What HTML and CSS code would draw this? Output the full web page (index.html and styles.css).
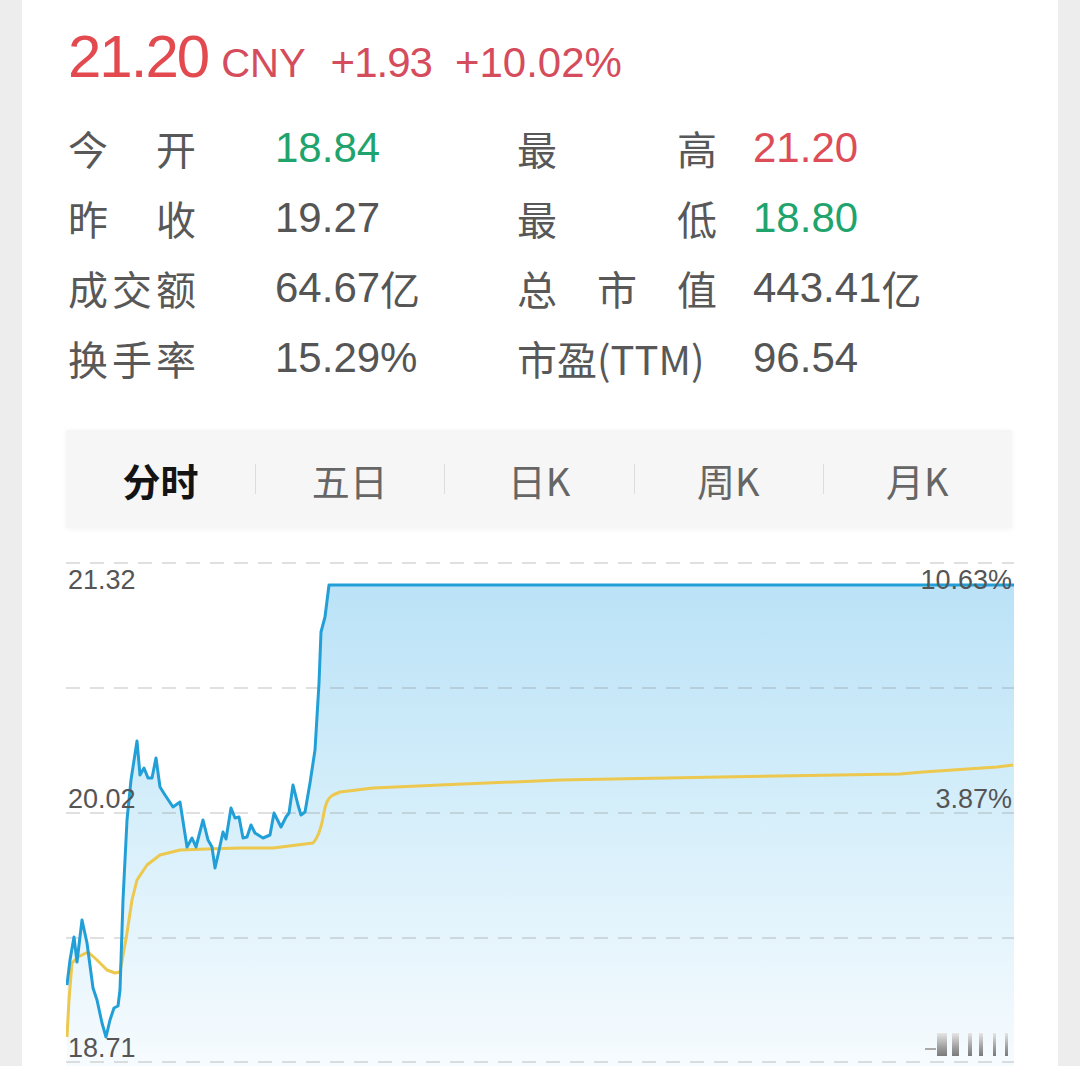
FILE: index.html
```html
<!DOCTYPE html>
<html lang="zh-CN">
<head>
<meta charset="utf-8">
<title>行情</title>
<link rel="stylesheet" href="styles.css">
</head>
<body>
<div class="card">
  <div class="quote">
    <span class="price">21.20</span>
    <span class="cur">CNY</span>
    <span class="chg chg1">+1.93</span>
    <span class="chg chg2">+10.02%</span>
  </div>

  <div class="stats">
    <div class="lbl"><span class="lw lw-l"><span>今</span><span>开</span></span></div>
    <div class="val green">18.84</div>
    <div class="lbl"><span class="lw lw-r"><span>最</span><span>高</span></span></div>
    <div class="val red">21.20</div>

    <div class="lbl"><span class="lw lw-l"><span>昨</span><span>收</span></span></div>
    <div class="val">19.27</div>
    <div class="lbl"><span class="lw lw-r"><span>最</span><span>低</span></span></div>
    <div class="val green">18.80</div>

    <div class="lbl"><span class="lw lw-l"><span>成</span><span>交</span><span>额</span></span></div>
    <div class="val">64.67<span class="cjk">亿</span></div>
    <div class="lbl"><span class="lw lw-r"><span>总</span><span>市</span><span>值</span></span></div>
    <div class="val">443.41<span class="cjk">亿</span></div>

    <div class="lbl"><span class="lw lw-l"><span>换</span><span>手</span><span>率</span></span></div>
    <div class="val">15.29%</div>
    <div class="lbl"><span class="lw lw-r"><span>市盈(TTM)</span></span></div>
    <div class="val">96.54</div>
  </div>

  <div class="tabs">
    <div class="tab active">分时</div>
    <div class="tab">五日</div>
    <div class="tab">日K</div>
    <div class="tab">周K</div>
    <div class="tab">月K</div>
  </div>

  <svg class="chart" width="948" height="504" viewBox="66 562 948 504" xmlns="http://www.w3.org/2000/svg">
    <defs>
      <linearGradient id="fill" gradientUnits="userSpaceOnUse" x1="0" y1="585" x2="0" y2="1066">
        <stop offset="0" stop-color="#bbe2f7"/>
        <stop offset="0.45" stop-color="#d4eefa"/>
        <stop offset="1" stop-color="#f6fbfe"/>
      </linearGradient>
      <linearGradient id="bar" x1="0" y1="0" x2="0" y2="1">
        <stop offset="0" stop-color="#e6e6e6"/>
        <stop offset="0.6" stop-color="#a0a0a0"/>
        <stop offset="1" stop-color="#7a7a7a"/>
      </linearGradient>
    </defs>

    <polygon fill="url(#fill)" points="67,1066 67,985 70,960 74,937 77,962 82,920 87,943 93,988 97,1000 102,1023 106,1037 110,1020 114,1008 118,1006 120,990 123,900 127,820 131,780 137,741 140,775 144,768 148,778 152,778 156,758 160,787 165,795 173,807 180,802 187,847 192,838 196,847 203,820 208,840 212,847 215,868 218,855 223,832 226,839 231,808 235,818 239,817 243,838 247,837 251,825 255,833 263,838 270,835 274,813 281,827 286,817 289,813 293,785 298,805 301,815 305,812 310,783 315,750 319,683 321,632 325,617 329,585 1014,585 1014,1066"/>

    <g class="grid">
      <line x1="66" y1="563" x2="1014" y2="563"/>
      <line x1="66" y1="688" x2="1014" y2="688"/>
      <line x1="66" y1="813" x2="1014" y2="813"/>
      <line x1="66" y1="938" x2="1014" y2="938"/>
      <line x1="66" y1="1062" x2="1014" y2="1062"/>
    </g>

    <path class="avg" d="M67,1037 L69,1000 L72,963 L78,957 L88,952 L97,960 L107,970 L115,973 L120,972 L127,933 L132,900 L137,880 L147,865 L160,855 L180,850 L207,849 L240,848 L273,848 L313,843 C318,838 321,828 323,818 C325,806 327,798 333,795 L340,792 L373,788 L440,785 L560,780 L720,777 L900,774 L923,772 L997,767 L1013,765"/>

    <polyline class="px" points="67,985 70,960 74,937 77,962 82,920 87,943 93,988 97,1000 102,1023 106,1037 110,1020 114,1008 118,1006 120,990 123,900 127,820 131,780 137,741 140,775 144,768 148,778 152,778 156,758 160,787 165,795 173,807 180,802 187,847 192,838 196,847 203,820 208,840 212,847 215,868 218,855 223,832 226,839 231,808 235,818 239,817 243,838 247,837 251,825 255,833 263,838 270,835 274,813 281,827 286,817 289,813 293,785 298,805 301,815 305,812 310,783 315,750 319,683 321,632 325,617 329,585 1014,585"/>

    <g class="vol">
      <line x1="925" y1="1049" x2="936" y2="1049"/>
      <rect x="937" y="1033" width="10" height="23" fill="url(#bar)"/>
      <rect x="952" y="1033" width="7" height="23" fill="url(#bar)"/>
      <rect x="968" y="1033" width="4" height="23" fill="url(#bar)"/>
      <rect x="979" y="1033" width="4" height="23" fill="url(#bar)"/>
      <rect x="993" y="1033" width="3" height="23" fill="url(#bar)"/>
      <rect x="1005" y="1033" width="3" height="23" fill="url(#bar)"/>
    </g>

    <text class="axis" x="68" y="589">21.32</text>
    <text class="axis" x="1012" y="589" text-anchor="end">10.63%</text>
    <text class="axis" x="68" y="808">20.02</text>
    <text class="axis" x="1012" y="808" text-anchor="end">3.87%</text>
    <text class="axis" x="68" y="1057">18.71</text>
  </svg>
</div>
</body>
</html>
```

FILE: styles.css
```css
html, body {
  margin: 0;
  padding: 0;
}
body {
  background: #ededed;
  width: 1080px;
  height: 1066px;
  overflow: hidden;
  font-family: "Liberation Sans", "Noto Sans CJK SC", sans-serif;
}
.card {
  margin: 0 22px;
  height: 1066px;
  background: #ffffff;
  box-sizing: border-box;
  padding: 27px 44px 0 44px;
  overflow: hidden;
}

/* header quote */
.quote {
  display: flex;
  align-items: baseline;
  height: 60px;
  line-height: 60px;
  margin-left: 2px;
  color: #d54c5c;
}
.price {
  font-size: 60px;
  letter-spacing: -2px;
  color: #e34a50;
}
.cur {
  font-size: 40px;
  margin-left: 13px;
}
.chg {
  font-size: 42px;
}
.chg1 { margin-left: 25px; letter-spacing: -1px; }
.chg2 { margin-left: 23px; }

/* stats grid */
.stats {
  display: grid;
  grid-template-columns: 207px 242px 236px 1fr;
  grid-auto-rows: 70px;
  margin: 26px 0 0 2px;
  color: #585858;
}
.lbl {
  display: flex;
  align-items: center;
  font-family: "Noto Sans CJK SC", sans-serif;
  font-size: 40px;
  line-height: 1;
}
.lw {
  display: flex;
  justify-content: space-between;
}
.lw-l { width: 128px; }
.lw-r { width: 200px; }
.val {
  display: flex;
  align-items: center;
  font-size: 42px;
  line-height: 1;
  color: #555555;
}
.cjk {
  font-family: "Noto Sans CJK SC", sans-serif;
  font-size: 40px;
}
.green { color: #1ea46c; }
.red { color: #dc4d58; }

/* tabs */
.tabs {
  display: grid;
  grid-template-columns: repeat(5, 1fr);
  width: 946px;
  height: 98px;
  margin-top: 37px;
  background: #f6f6f6;
  box-shadow: 0 1px 6px rgba(0, 0, 0, 0.05);
}
.tab {
  position: relative;
  display: flex;
  align-items: center;
  justify-content: center;
  font-family: "Noto Sans CJK SC", sans-serif;
  font-size: 38px;
  color: #666666;
}
.tab + .tab::before {
  content: "";
  position: absolute;
  left: 0;
  top: 34px;
  width: 1px;
  height: 30px;
  background: #dddddd;
}
.tab.active {
  color: #141414;
  font-weight: 700;
}

/* chart */
.chart {
  display: block;
  margin-top: 34px;
}
.grid line {
  stroke: rgba(140, 140, 140, 0.35);
  stroke-width: 1.5;
  stroke-dasharray: 14 10;
}
.px {
  fill: none;
  stroke: #239fd8;
  stroke-width: 3;
  stroke-linejoin: round;
}
.avg {
  fill: none;
  stroke: #ecc84e;
  stroke-width: 3;
  stroke-linejoin: round;
}
.vol line {
  stroke: #aaaaaa;
  stroke-width: 2;
}
.axis {
  font-family: "Liberation Sans", sans-serif;
  font-size: 27px;
  fill: #555555;
}
```
